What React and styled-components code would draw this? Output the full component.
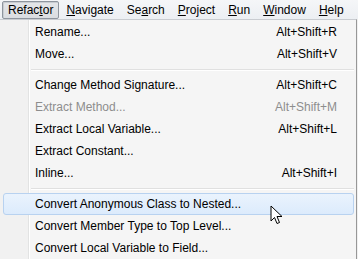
import React from "react";
import styled, { createGlobalStyle } from "styled-components";

const Global = createGlobalStyle`
  html, body { margin: 0; padding: 0; background: #ffffff; }
  body { font-family: "Liberation Sans", Arial, sans-serif; font-size: 12px; color: #000; }
`;

const Page = styled.div`
  width: 358px;
  height: 259px;
  overflow: hidden;
  display: flex;
  flex-direction: column;
  background: #f0f0f0;
`;

const MenuBar = styled.div`
  height: 20px;
  display: flex;
  align-items: center;
  padding-left: 2px;
  background: linear-gradient(#f5f6f8, #eceff3);
  box-sizing: border-box;
`;

const BarItem = styled.div`
  height: 18px;
  padding: 0 5px;
  margin-right: ${(p) => p.$mr || 0}px;
  display: flex;
  align-items: center;
  box-sizing: border-box;
  border: 1px solid ${(p) => (p.$open ? "#8e959e" : "transparent")};
  border-radius: 2px;
  background: ${(p) => (p.$open ? "linear-gradient(#e4e6e9, #dadde1)" : "transparent")};
  box-shadow: ${(p) => (p.$open ? "inset 1px 1px 0 #c8ccd1" : "none")};
  white-space: nowrap;
`;

const U = styled.span`
  text-decoration: underline;
  text-underline-offset: 1px;
`;

const Menu = styled.div`
  flex: 1;
  position: relative;
  border-top: 1px solid #c9ccd1;
  border-right: 1px solid #979797;
  margin-right: 1px;
  padding: 1px 2px 0 2px;
  background: linear-gradient(90deg, #f1f1f1 0, #f1f1f1 28px, #e2e3e3 28px, #e2e3e3 29px, #ffffff 29px, #ffffff 30px, #f5f5f5 30px);
`;

const Row = styled.div`
  height: 22px;
  display: flex;
  align-items: center;
  box-sizing: border-box;
  margin-left: 1px;
  padding-left: 31px;
  padding-right: 16px;
  border: 1px solid ${(p) => (p.$hot ? "#b8d2f0" : "transparent")};
  border-radius: 3px;
  background: ${(p) => (p.$hot ? "linear-gradient(#eaf3fd, #dcebfc)" : "transparent")};
  color: ${(p) => (p.$disabled ? "#8d8d8d" : "#000")};
  white-space: nowrap;
`;

const Label = styled.span`
  flex: 1;
`;

const Shortcut = styled.span`
  text-align: right;
`;

const Separator = styled.div`
  height: 9px;
  display: flex;
  align-items: center;
  padding-left: 29px;
  &::before {
    content: "";
    flex: 1;
    height: 1px;
    background: #e0e0e0;
    box-shadow: 0 1px 0 #ffffff;
  }
`;

const Cursor = styled.svg`
  position: absolute;
  left: 270px;
  top: 185px;
`;

const items = [
  { t: "Rename...", k: "Alt+Shift+R" },
  { t: "Move...", k: "Alt+Shift+V" },
  { sep: true },
  { t: "Change Method Signature...", k: "Alt+Shift+C" },
  { t: "Extract Method...", k: "Alt+Shift+M", d: true },
  { t: "Extract Local Variable...", k: "Alt+Shift+L" },
  { t: "Extract Constant..." },
  { t: "Inline...", k: "Alt+Shift+I" },
  { sep: true },
  { t: "Convert Anonymous Class to Nested...", hot: true },
  { t: "Convert Member Type to Top Level..." },
  { t: "Convert Local Variable to Field..." },
];

export default function App() {
  return (
    <Page>
      <Global />
      <MenuBar>
        <BarItem $open $mr={1}>Refac<U>t</U>or</BarItem>
        <BarItem $mr={1}><U>N</U>avigate</BarItem>
        <BarItem $mr={1}>Se<U>a</U>rch</BarItem>
        <BarItem $mr={1}><U>P</U>roject</BarItem>
        <BarItem $mr={1}><U>R</U>un</BarItem>
        <BarItem $mr={1}><U>W</U>indow</BarItem>
        <BarItem><U>H</U>elp</BarItem>
      </MenuBar>
      <Menu>
        {items.map((it, i) =>
          it.sep ? (
            <Separator key={i} />
          ) : (
            <Row key={i} $hot={it.hot} $disabled={it.d}>
              <Label>{it.t}</Label>
              {it.k && <Shortcut>{it.k}</Shortcut>}
            </Row>
          )
        )}
        <Cursor width="13" height="21" viewBox="0 0 13 21">
          <path d="M1 1 L1 16 L4.5 12.5 L7 18.5 L9.5 17.5 L7 11.5 L12 11.5 Z" fill="#ffffff" stroke="#000000" strokeWidth="1" />
        </Cursor>
      </Menu>
    </Page>
  );
}
